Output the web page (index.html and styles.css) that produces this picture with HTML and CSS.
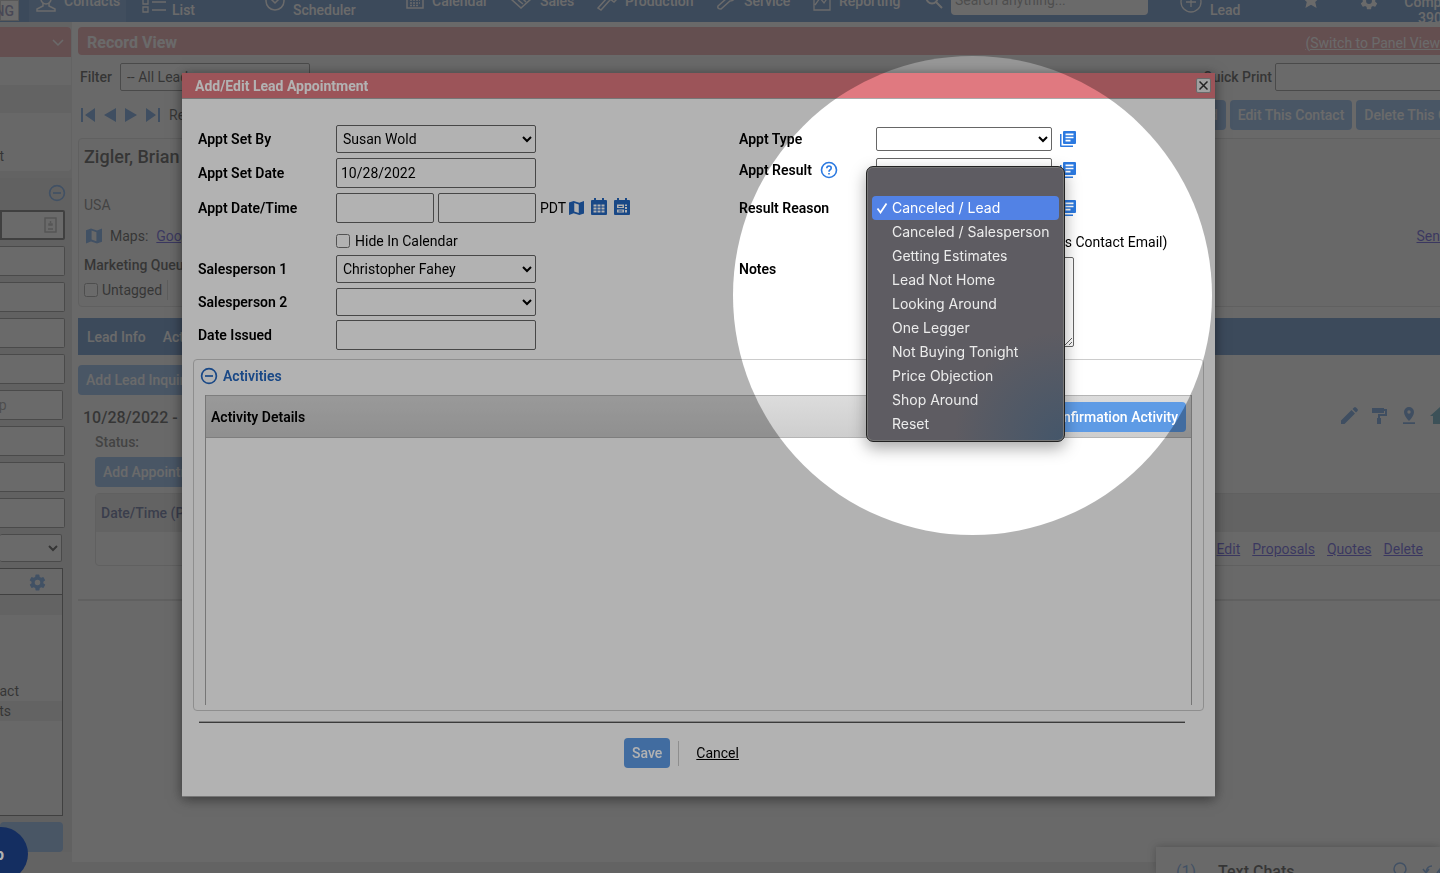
FILE: index.html
```html
<!DOCTYPE html>
<html lang="en">
<head>
    <meta charset="UTF-8">
    <meta name="viewport" content="width=device-width, initial-scale=1.0">
    <title>Record View</title>
    <link rel="stylesheet" href="styles.css">
</head>
<body>
    <!-- Shared icons -->
    <svg class="icon-defs" aria-hidden="true">
        <symbol id="i-map" viewBox="0 0 16 16"><path fill="currentColor" fill-rule="evenodd" d="M0 2.2 5 .5l6 2L16 .6v13.2l-5 1.7-6-2-5 1.9zM5.6 2.6v9l4.8 1.7v-9z"/></symbol>
        <symbol id="i-minus" viewBox="0 0 18 18"><g fill="none" stroke="currentColor" stroke-width="1.7"><circle cx="9" cy="9" r="7.4"/><path d="M5 9h8"/></g></symbol>
        <symbol id="i-copy" viewBox="0 0 18 18"><path fill="currentColor" fill-rule="evenodd" d="M5 1h11q1 0 1 1v11q0 1-1 1H5q-1 0-1-1V2q0-1 1-1zM6.500 3.600v1.600h8V3.600zm0 3.100v1.600h8V6.700zm0 3.100v1.600h5V9.800z"/><path fill="currentColor" d="M1 4h1.500v11.500H14V17H2q-1 0-1-1z"/></symbol>
        <symbol id="i-cal" viewBox="0 0 16 18"><path fill="currentColor" fill-rule="evenodd" d="M3 0h2v2h6V0h2v2h2q1 0 1 1v13q0 1-1 1H1q-1 0-1-1V3q0-1 1-1h2zM2.500 6.500v8h11v-8z"/><path stroke="currentColor" fill="none" d="M6 6v9M10 6v9M2 9h12M2 12h12"/></symbol>
        <symbol id="i-cal-edit" viewBox="0 0 16 18"><path fill="currentColor" fill-rule="evenodd" d="M3 0h2v2h6V0h2v2h2q1 0 1 1v13q0 1-1 1H1q-1 0-1-1V3q0-1 1-1h2zM3 6.500v3.500h7V6.500zm8 0V8h2V6.500zM11 9v2h2V9zM3 11.500v3h7v-3zm8 .5v2.500h2V12z"/><path stroke="currentColor" fill="none" d="M4.500 8.500h4M4.500 13h4"/></symbol>
        <symbol id="i-gear" viewBox="0 0 24 24"><path fill="currentColor" d="M19.400 13a7 7 0 0 0 0-2l2.100-1.600a.5.5 0 0 0 .1-.6l-2-3.500a.5.5 0 0 0-.6-.2l-2.500 1a7 7 0 0 0-1.700-1l-.4-2.700a.5.5 0 0 0-.5-.4h-4a.5.5 0 0 0-.5.400L9 5.100a7 7 0 0 0-1.700 1l-2.500-1a.5.5 0 0 0-.6.200l-2 3.500a.5.5 0 0 0 .1.600L4.500 11a7 7 0 0 0 0 2l-2.100 1.600a.5.5 0 0 0-.1.600l2 3.500c.1.200.4.300.6.200l2.500-1a7 7 0 0 0 1.700 1l.4 2.700c0 .2.200.4.500.4h4c.2 0 .5-.2.500-.4l.4-2.700a7 7 0 0 0 1.700-1l2.500 1c.2.100.5 0 .6-.2l2-3.500a.5.5 0 0 0-.1-.6zM12 15.500a3.500 3.500 0 1 1 0-7 3.500 3.500 0 0 1 0 7z"/></symbol>
    </svg>

    <!-- Top navigation -->
    <header class="topbar">
        <div class="logo">ING</div>
        <a class="nav-item active" href="#"><svg width="20" height="22" viewBox="0 0 20 22" fill="none" stroke="currentColor" stroke-width="1.500"><circle cx="10" cy="8" r="5"/><path d="M7 12v3L1 18v2h18v-2l-6-3v-3"/></svg><span>Contacts</span></a>
        <a class="nav-item list low" href="#"><svg width="24" height="26" viewBox="0 0 24 26" fill="none" stroke="currentColor" stroke-width="1.300"><path d="M1 12h5v5H1zM1 20h5v5H1zM10 15h14M10 23h14"/></svg><span>List</span></a>
        <a class="nav-item scheduler low" href="#"><svg width="20" height="20" viewBox="0 0 20 20" fill="none" stroke="currentColor" stroke-width="1.500"><circle cx="10" cy="10" r="9"/><path d="m6 8 4 4 4-4"/></svg><span>Scheduler</span></a>
        <a class="nav-item calendar" href="#"><svg width="18" height="18" viewBox="0 0 18 18" fill="none" stroke="currentColor" stroke-width="1.500"><path d="M1 2h16v15H1zM1 6h16"/><path stroke-dasharray="2 1" d="M4 9h10M4 12h10M4 14.500h8"/></svg><span>Calendar</span></a>
        <a class="nav-item sales" href="#"><svg width="22" height="18" viewBox="0 0 22 18" fill="none" stroke="currentColor" stroke-width="1.500"><path d="m1 8 10 9 10-9-4-5-6 3-5-3zM8 9l5 4M11 6l5 5"/></svg><span>Sales</span></a>
        <a class="nav-item production" href="#"><svg width="20" height="20" viewBox="0 0 20 20" fill="none" stroke="currentColor" stroke-width="1.500"><path d="m1 17 9-10 3 2L4 19zM8 6l4-4 7 7-2 2-4-3"/></svg><span>Production</span></a>
        <a class="nav-item service" href="#"><svg width="20" height="20" viewBox="0 0 20 20" fill="none" stroke="currentColor" stroke-width="1.500"><path d="M2 15 11 7q-1-4 4-6l-1 4 2 1 3-2q0 6-5 6l-9 8q-4 0-3-3z"/></svg><span>Service</span></a>
        <a class="nav-item reporting" href="#"><svg width="18" height="20" viewBox="0 0 18 20" fill="none" stroke="currentColor" stroke-width="1.300"><path d="M1 1v18h16V1M2 14l5-7 4 5 6-9"/></svg><span>Reporting</span></a>
        <div class="search">
            <svg width="18" height="18" viewBox="0 0 18 18" fill="none" stroke="currentColor" stroke-width="2"><circle cx="7" cy="7" r="5.500"/><path d="m11 11 6 6"/></svg>
            <input type="text" placeholder="Search anything..." aria-label="Search anything">
        </div>
        <a class="nav-item add low" href="#"><svg width="22" height="22" viewBox="0 0 22 22" fill="none" stroke="currentColor" stroke-width="1.300"><circle cx="11" cy="11" r="10"/><path d="M11 6v10M6 11h10"/></svg><span>Lead</span></a>
        <a class="nav-item star" href="#" aria-label="Favorites"><svg width="18" height="18" viewBox="0 0 18 18"><path fill="currentColor" d="m9 0 2.600 6L18 6.600l-4.800 4.300L14.600 17 9 13.800 3.400 17l1.400-6.100L0 6.600 6.400 6z"/></svg></a>
        <a class="nav-item settings" href="#" aria-label="Settings"><svg width="20" height="20"><use href="#i-gear"/></svg></a>
        <div class="company">Company<br>3900</div>
    </header>

    <div class="app">
        <!-- Left sidebar, scrolled out to the left -->
        <aside class="sidebar">
            <section class="side-panel">
                <div class="side-title"><svg width="12" height="12" viewBox="0 0 12 12" fill="none" stroke="currentColor" stroke-width="1.500"><path d="m1 4 5 5 5-5"/></svg></div>
                <div class="side-row"></div>
                <div class="side-row shaded"></div>
                <div class="side-row"></div>
                <div class="side-row">Contact</div>
            </section>
            <section class="side-search">
                <div class="side-head"><svg width="18" height="18"><use href="#i-minus"/></svg></div>
                <div class="name-field">
                    <input class="focused" type="text" aria-label="Last name">
                    <svg width="13" height="16" viewBox="0 0 13 16" fill="none" stroke="currentColor" stroke-width="1.500"><path d="M1 1h11v14H1zM4 12h5M5 8h3V7H5zM6.500 4v2"/></svg>
                </div>
                <input type="text" aria-label="First name">
                <input type="text" aria-label="Address">
                <input type="text" aria-label="City">
                <input type="text" aria-label="State">
                <input class="short" type="text" placeholder="Zip" aria-label="Zip">
                <input type="text" aria-label="Phone">
                <input type="text" aria-label="Email">
                <input type="text" aria-label="Lead number">
                <select class="short" aria-label="Status"><option></option></select>
                <div class="tag-box">
                    <div class="tag-head"><svg width="19" height="19"><use href="#i-gear"/></svg></div>
                    <div class="tag-row shaded"></div>
                    <div class="tag-space"></div>
                    <div class="tag-row contact">Contact</div>
                    <div class="tag-row shaded appts">Appts</div>
                </div>
                <button class="btn side-btn" type="button" aria-label="Search"></button>
            </section>
        </aside>

        <!-- Record content -->
        <main class="content">
            <div class="record-bar">
                <h1>Record View</h1>
                <a href="#">(Switch to Panel View)</a>
            </div>
            <div class="filter-row">
                <label for="filter">Filter</label>
                <select id="filter"><option>-- All Leads --</option></select>
                <label class="push" for="print">Quick Print</label>
                <select id="print"><option></option></select>
            </div>
            <div class="pager">
                <svg width="14" height="14" viewBox="0 0 14 14"><path fill="currentColor" d="M0 0h2v14H0zM14 0v14L4 7z"/></svg>
                <svg width="12" height="14" viewBox="0 0 12 14"><path fill="currentColor" d="M12 0v14L0 7z"/></svg>
                <svg width="12" height="14" viewBox="0 0 12 14"><path fill="currentColor" d="M0 0v14l12-7z"/></svg>
                <svg width="14" height="14" viewBox="0 0 14 14"><path fill="currentColor" d="M12 0h2v14h-2zM0 0v14l10-7z"/></svg>
                <span>Record 1</span>
                <button class="btn push" type="button">Add Lead</button>
                <button class="btn" type="button">Edit This Contact</button>
                <button class="btn" type="button">Delete This Contact</button>
            </div>

            <section class="card">
                <h2>Zigler, Brian</h2>
                <p class="country">USA</p>
                <div class="maps"><svg width="16" height="16"><use href="#i-map"/></svg><span>Maps:</span><a href="#">Google</a><a class="push" href="#">Send Email</a></div>
                <p class="queue">Marketing Queue</p>
                <div class="tags"><input type="checkbox" id="untagged"><label for="untagged">Untagged</label></div>
            </section>

            <nav class="tabs"><a href="#">Lead Info</a><a href="#">Activities</a></nav>
            <button class="btn inquiry" type="button">Add Lead Inquiry</button>

            <div class="lead-head">
                <h3>10/28/2022 - Lead</h3>
                <div class="lead-icons">
                    <svg width="17" height="17" viewBox="0 0 17 17"><path fill="currentColor" d="M0 13.500 10.500 3 14 6.500 3.500 17H0zM11.500 2 13 .5q1-.8 2 0L16.500 2q.8 1 0 2L15 5.500z"/></svg>
                    <svg width="16" height="17" viewBox="0 0 16 17"><path fill="currentColor" d="M0 1h12v1h3v7H8v2h1v6H5v-6h1V7h7V4h-1v2H0z"/></svg>
                    <svg width="14" height="17" viewBox="0 0 14 17"><path fill="currentColor" fill-rule="evenodd" d="M7 0a5 5 0 0 1 5 5q0 4-5 9-5-5-5-9a5 5 0 0 1 5-5zm0 3.300a1.700 1.700 0 1 0 0 3.400 1.700 1.700 0 0 0 0-3.400zM1 15.300h12V17H1z"/></svg>
                    <svg class="house" width="20" height="17" viewBox="0 0 20 17"><path fill="currentColor" d="m10 0 10 9h-3v8H3V9H0z"/></svg>
                </div>
            </div>
            <div class="lead-body">
                <p class="status">Status:</p>
                <button class="btn" type="button">Add Appointment</button>
                <table class="appts-table">
                    <thead><tr><th>Date/Time (PDT)</th><th></th></tr></thead>
                    <tbody><tr><td></td><td><a href="#">Edit</a><a href="#">Proposals</a><a href="#">Quotes</a><a href="#">Delete</a></td></tr></tbody>
                </table>
            </div>
            <hr>
        </main>
    </div>

    <footer class="footer"><span>Privacy Policy</span> | <span>Cookie Policy</span> | <span>Support</span> | Need Help? Contact Technical Support at 1.800.564.4840</footer>

    <div class="text-chats">
        <span class="count">(1)</span><strong>Text Chats</strong>
        <svg width="15" height="18" viewBox="0 0 15 18" fill="none" stroke="currentColor" stroke-width="1.500"><circle cx="7" cy="7" r="6"/><path d="m11 11 3 5"/></svg>
        <svg width="22" height="16" viewBox="0 0 22 16" fill="none" stroke="currentColor" stroke-width="1.500"><path d="M10 2q-5 0-6 6m-3-3 3 4 3-4M12 14q5 0 6-8m-3 3 3-4 3 4"/></svg>
    </div>

    <div class="backdrop"></div>
    <button class="help-bubble" type="button">Help</button>

    <!-- Add/Edit appointment dialog -->
    <div class="modal" role="dialog" aria-labelledby="modal-title">
        <div class="modal-title">
            <h2 id="modal-title">Add/Edit Lead Appointment</h2>
            <button class="close" type="button" aria-label="Close"><svg width="9" height="9" viewBox="0 0 9 9" fill="none" stroke="currentColor" stroke-width="1.500"><path d="m.5.5 8 8m0-8-8 8"/></svg></button>
        </div>
        <form class="modal-body">
            <div class="form-cols">
                <div class="form-left">
                    <label for="set-by">Appt Set By</label>
                    <select id="set-by"><option>Susan Wold</option></select>
                    <label for="set-date">Appt Set Date</label>
                    <input id="set-date" type="text" value="10/28/2022">
                    <label for="appt-date">Appt Date/Time</label>
                    <div class="date-time">
                        <input id="appt-date" type="text">
                        <input type="text" aria-label="Appt time">
                        <span>PDT</span>
                        <svg width="15" height="16"><use href="#i-map"/></svg>
                        <svg width="16" height="18"><use href="#i-cal"/></svg>
                        <svg width="16" height="18"><use href="#i-cal-edit"/></svg>
                    </div>
                    <div class="check"><input type="checkbox" id="hide-cal"><label for="hide-cal">Hide In Calendar</label></div>
                    <label for="sales-1">Salesperson 1</label>
                    <select id="sales-1"><option>Christopher Fahey</option></select>
                    <label for="sales-2">Salesperson 2</label>
                    <select id="sales-2"><option></option></select>
                    <label for="issued">Date Issued</label>
                    <input id="issued" type="text">
                </div>
                <div class="form-right">
                    <label for="type">Appt Type</label>
                    <div class="pick"><select id="type"><option></option></select><svg width="18" height="18"><use href="#i-copy"/></svg></div>
                    <label class="with-help" for="result">Appt Result
                        <svg width="18" height="18" viewBox="0 0 18 18" fill="none" stroke="currentColor" stroke-width="1.600"><circle cx="9" cy="9" r="7.500"/><path d="M6.800 7.300Q6.800 5 9 5t2.200 2q0 1.200-1.300 2Q9 9.600 9 10.700M9 12v1.600"/></svg>
                    </label>
                    <div class="pick"><select id="result"><option></option></select><svg width="18" height="18"><use href="#i-copy"/></svg></div>
                    <label for="reason">Result Reason</label>
                    <div class="pick">
                        <select id="reason"><option></option></select><svg width="18" height="18"><use href="#i-copy"/></svg>
                        <ul class="dropdown" role="listbox" aria-label="Result Reason">
                            <li role="option"></li>
                            <li class="selected" role="option" aria-selected="true"><svg width="12" height="12" viewBox="0 0 12 12" fill="none" stroke="currentColor" stroke-width="1.800"><path d="m1.500 6.500 3 4 6-9"/></svg>Canceled / Lead</li>
                            <li role="option">Canceled / Salesperson</li>
                            <li role="option">Getting Estimates</li>
                            <li role="option">Lead Not Home</li>
                            <li role="option">Looking Around</li>
                            <li role="option">One Legger</li>
                            <li role="option">Not Buying Tonight</li>
                            <li role="option">Price Objection</li>
                            <li role="option">Shop Around</li>
                            <li role="option">Reset</li>
                        </ul>
                    </div>
                    <div class="email-note">Send Confirmation (Uses Contact Email)</div>
                    <label for="notes">Notes</label>
                    <textarea id="notes"></textarea>
                </div>
            </div>

            <section class="activities">
                <h3><svg width="18" height="18"><use href="#i-minus"/></svg>Activities</h3>
                <div class="activity-box">
                    <div class="activity-head"><span>Activity Details</span><button class="btn" type="button">Add Confirmation Activity</button></div>
                </div>
            </section>
            <hr>
            <div class="actions"><button class="btn" type="submit">Save</button><a href="#">Cancel</a></div>
        </form>
    </div>

    <div class="spotlight"></div>
</body>
</html>
```
FILE: styles.css
```css
* {
    box-sizing: border-box;
}

body {
    margin: 0;
    height: 100vh;
    overflow: hidden;
    display: flex;
    flex-direction: column;
    font-family: Roboto, Arial, sans-serif;
    font-size: 14px;
    line-height: 20px;
    color: #000;
    background-color: #dcdcdc;
}

h1, h2, h3, p {
    margin: 0;
    font-weight: 500;
}

a {
    color: #1a0dcc;
}

svg {
    flex: none;
}

input, select, textarea, button {
    font-family: inherit;
    font-size: 14px;
    color: inherit;
}

input[type="text"], select, textarea {
    margin: 0;
    height: 30px;
    padding: 0 4px;
    border: 1px solid #666;
    border-radius: 2px;
    background-color: #fff;
}

select {
    height: 28px;
    padding: 0 2px;
}

input[type="checkbox"] {
    width: 14px;
    height: 14px;
    margin: 0;
}

.icon-defs {
    position: absolute;
    width: 0;
    height: 0;
}

.btn {
    height: 30px;
    padding: 0 8px;
    border: none;
    border-radius: 4px;
    background-color: #5e9be5;
    color: #fff;
    font-weight: 500;
    white-space: nowrap;
}

.push {
    margin-left: auto;
}

/* Top navigation */
.topbar {
    flex: none;
    display: grid;
    grid-template-columns: 19px 10px 97px 139px 141px 104px 87px 119px 97px 97px 270px 122px 57px 35px 80px;
    height: 22px;
    overflow: hidden;
    color: #fff;
    font-weight: 500;
    background-color: #2161b4;
}

.logo {
    display: flex;
    justify-content: flex-end;
    height: 21px;
    padding-right: 4px;
    border: 1px solid #aaa;
    background-color: #fff;
    color: #57589a;
}

.nav-item {
    display: flex;
    gap: 8px;
    color: #fff;
    text-decoration: none;
}

.nav-item span {
    margin-top: -9px;
}

.nav-item svg {
    margin-top: -9px;
}

.nav-item.low span {
    margin-top: 0;
}

.nav-item.active {
    grid-column: 3;
    padding-left: 7px;
    background-color: #3877c4;
}

.nav-item.list {
    padding-left: 16px;
    gap: 6px;
}

.nav-item.list svg {
    margin-top: -13px;
}

.company {
    text-align: center;
    line-height: 16px;
    margin-top: -6px;
}

.search {
    display: flex;
    gap: 8px;
    padding-left: 15px;
}

.search svg {
    margin-top: -9px;
}

.search input[type="text"] {
    width: 197px;
    height: 30px;
    margin-top: -15px;
    border: none;
    border-radius: 4px;
}

/* Page columns */
.app {
    flex: 1;
    min-height: 0;
    display: flex;
}

.sidebar {
    flex: none;
    width: 72px;
    padding-top: 5px;
    overflow: hidden;
}

.side-panel {
    height: 144px;
    margin-right: 1px;
    border-radius: 0 4px 4px 0;
    background-color: #f6f6f6;
}

.side-title {
    display: flex;
    justify-content: flex-end;
    align-items: center;
    height: 30px;
    padding-right: 7px;
    border-radius: 0 4px 0 0;
    background-color: #e07980;
    color: #fff;
}

.side-row {
    display: flex;
    justify-content: flex-end;
    height: 28px;
    padding: 5px 67px 0 0;
}

.shaded {
    background-color: #dcdcdc;
}

.side-search {
    display: flex;
    flex-direction: column;
    align-items: flex-start;
    gap: 6px;
    margin-top: 7px;
    padding-right: 6px;
    background-color: #d4d4d4;
}

.side-head {
    display: flex;
    justify-content: flex-end;
    width: 66px;
    height: 26px;
    padding-top: 6px;
    color: #3b82e0;
}

.side-search input[type="text"], .name-field {
    width: 65px;
    border-left: none;
    border-radius: 0 2px 2px 0;
}

.side-search .short {
    width: 62px;
    border-left: none;
}

.side-search input[type="text"].short {
    width: 63px;
    padding: 0;
    text-indent: -13px;
}

.name-field {
    display: flex;
    align-items: center;
    color: #999;
}

.name-field svg {
    margin-left: -21px;
}

.side-search input.focused {
    border: 2px solid #333;
}

.tag-box {
    width: 63px;
    height: 248px;
    border: 1px solid #333;
    border-left: none;
    background-color: #f6f6f6;
}

.tag-head {
    display: flex;
    justify-content: flex-end;
    height: 26px;
    padding: 4px 15px 0 0;
    border-bottom: 1px solid #333;
    color: #3b82e0;
}

.tag-row {
    display: flex;
    justify-content: flex-end;
    height: 20px;
}

.tag-space {
    height: 66px;
}

.tag-row.contact {
    padding-right: 43px;
}

.tag-row.appts {
    padding-right: 51px;
}

.side-btn {
    width: 63px;
}

/* Record content runs past the right edge of the window */
.content {
    flex: 1;
    min-width: 0;
    margin-right: -55px;
    padding: 5px 0 0 6px;
    background-color: #f8f8f8;
}

.record-bar {
    display: flex;
    justify-content: space-between;
    align-items: center;
    height: 28px;
    padding: 3px 50px 0 9px;
    border-radius: 4px;
    background-color: #e07980;
    color: #fff;
}

.record-bar h1 {
    font-size: 16px;
    font-weight: 700;
}

.record-bar a {
    color: #fff;
}

.filter-row {
    display: flex;
    align-items: center;
    gap: 8px;
    margin-top: 8px;
    padding-left: 2px;
    font-weight: 500;
}

.filter-row select {
    width: 190px;
}

.filter-row .push {
    margin-right: -5px;
}

#print {
    width: 220px;
}

.pager {
    display: flex;
    align-items: center;
    gap: 4px;
    margin-top: 9px;
    padding-left: 3px;
    color: #000;
}

.pager svg {
    margin-right: 5px;
    color: #2f76cf;
}

.card {
    height: 169px;
    margin-top: 8px;
    padding: 8px 0 0 5px;
    border: 1px solid #ccc;
    border-radius: 4px;
    background-color: #f3f3f3;
}

.card h2 {
    font-size: 18px;
}

.country {
    margin-top: 28px;
    color: #444;
    font-weight: 400;
}

.maps {
    display: flex;
    align-items: center;
    gap: 8px;
    margin-top: 11px;
    padding: 0 8px 0 2px;
}

.maps svg {
    color: #3b82e0;
}

.queue {
    margin-top: 9px;
}

.tags {
    display: flex;
    align-items: center;
    gap: 4px;
    width: 84px;
    margin-top: 5px;
    border-right: 1px solid #bbb;
}

.tabs {
    display: flex;
    align-items: center;
    gap: 17px;
    height: 37px;
    margin-top: 11px;
    padding-left: 9px;
    background-color: #2161b4;
}

.tabs a {
    color: #fff;
    font-weight: 500;
    text-decoration: none;
}

.inquiry {
    display: block;
    margin-top: 10px;
}

.lead-head {
    display: flex;
    justify-content: space-between;
    margin-top: 12px;
    padding-left: 5px;
}

.lead-head h3 {
    font-size: 16px;
    line-height: 22px;
}

.lead-icons {
    display: flex;
    gap: 14px;
    width: 154px;
    color: #2f76cf;
}

.lead-icons .house {
    color: #1f86a8;
}

.lead-body {
    padding-left: 17px;
}

.status {
    margin: 3px 0 5px;
    color: #444;
}

.appts-table {
    width: 100%;
    margin-top: 6px;
    border: 1px solid #ccc;
    border-radius: 4px;
    border-spacing: 0;
}

.appts-table th {
    height: 38px;
    padding: 0 5px;
    background-color: #d9d9d9;
    color: #14286e;
    text-align: left;
    font-weight: 500;
}

.appts-table td {
    height: 33px;
    padding: 0 71px 0 0;
    text-align: right;
}

.appts-table a {
    margin-left: 12px;
}

.content hr {
    margin: 33px 0 0;
    border: 0;
    border-top: 2px solid #ccc;
}

.footer {
    flex: none;
    height: 11px;
    padding-top: 8px;
    overflow: hidden;
    text-align: center;
    line-height: 18px;
}

.footer span {
    color: #800080;
}

.text-chats {
    position: absolute;
    right: 0;
    bottom: 0;
    display: flex;
    gap: 22px;
    width: 284px;
    height: 26px;
    padding: 15px 0 0 20px;
    overflow: hidden;
    background-color: #f8f8f8;
    box-shadow: 0 0 8px rgba(0, 0, 0, 0.5);
    color: #3b82e0;
}

.text-chats strong {
    flex: 1;
    color: #000;
    font-size: 16px;
    font-weight: 500;
}

.text-chats .count {
    font-size: 16px;
}

.text-chats svg + svg {
    margin: 2px -4px 0 -8px;
}

/* Overlay and dialog */
.backdrop {
    position: fixed;
    inset: 0;
    background-color: rgba(110, 110, 110, 0.7);
}

.help-bubble {
    position: fixed;
    left: -66px;
    bottom: -8px;
    width: 94px;
    height: 54px;
    padding: 0 24px 0 0;
    border: none;
    border-radius: 27px;
    background-color: #1e428c;
    color: #fff;
    font-size: 16px;
    font-weight: 700;
    text-align: right;
}

.modal {
    position: fixed;
    left: 182px;
    right: 225px;
    top: 73px;
    background-color: #fff;
    border-bottom: 1px solid #aaa;
    box-shadow: 0 2px 12px rgba(0, 0, 0, 0.5);
}

.modal-title {
    display: flex;
    justify-content: space-between;
    align-items: center;
    height: 26px;
    padding: 0 4px 0 13px;
    border-bottom: 1px solid #aaa;
    background-color: #e07980;
    color: #fff;
}

.modal-title h2 {
    font-size: 14px;
    font-weight: 700;
}

.close {
    display: flex;
    align-items: center;
    justify-content: center;
    width: 15px;
    height: 15px;
    padding: 0;
    border: 1px solid #999;
    border-radius: 2px;
    background-color: #e6e6e6;
    color: #333;
}

.modal-body {
    padding: 26px 11px 28px;
}

.form-cols {
    display: grid;
    grid-template-columns: 541px 1fr;
    padding-left: 5px;
}

.form-left, .form-right {
    display: grid;
    align-content: start;
    align-items: center;
    row-gap: 5px;
}

.form-left {
    grid-template-columns: 138px 200px;
    grid-template-rows: 28px 29px 31px 22px 28px 27px 30px;
}

.form-right {
    grid-template-columns: 137px 1fr;
    grid-template-rows: 28px 24px 42px 16px 92px;
}

.form-left > label, .form-right > label {
    font-weight: 600;
}

.date-time {
    display: flex;
    align-items: center;
    gap: 4px;
    width: 320px;
    color: #000;
}

.date-time input[type="text"] {
    width: 98px;
}

.date-time svg {
    margin-right: 3px;
    color: #2467c0;
}

.date-time svg + svg {
    margin-bottom: 2px;
}

.date-time span {
    margin-right: -1px;
}

.check {
    grid-column: 2;
    display: flex;
    align-items: center;
    gap: 5px;
    padding-top: 3px;
}

.form-right .with-help {
    display: flex;
    align-items: center;
    gap: 8px;
}

.with-help svg, .pick svg {
    color: #2b79e0;
}

.pick {
    position: relative;
    display: flex;
    align-items: center;
    gap: 7px;
}

.pick select {
    width: 176px;
    height: 24px;
}

.email-note {
    grid-column: 2;
    padding-left: 41px;
    white-space: nowrap;
}

.form-right label[for="notes"] {
    align-self: start;
    line-height: 28px;
}

#notes {
    width: 198px;
    height: 90px;
    align-self: end;
}

.dropdown {
    position: absolute;
    left: -10px;
    top: -30px;
    width: 199px;
    margin: 0;
    padding: 5px;
    list-style: none;
    border: 1px solid #222;
    border-radius: 7px;
    background: radial-gradient(circle at bottom right, #44566a, #5e5c62 110px);
    box-shadow: inset 0 0 0 1px #777, 0 6px 16px rgba(0, 0, 0, 0.35);
    color: #ececec;
    font-family: Inter, Arial, sans-serif;
    font-weight: 400;
}

.dropdown li {
    display: flex;
    align-items: center;
    height: 24px;
    padding-left: 20px;
    border-radius: 4px;
    white-space: nowrap;
}

.dropdown .selected {
    gap: 4px;
    padding-left: 4px;
    background-color: #5282e5;
    color: #fff;
}

.pick .dropdown svg {
    color: #fff;
}

.activities {
    margin-top: 9px;
    padding: 6px 11px 5px;
    border: 1px solid #ccc;
    border-radius: 4px;
}

.activities h3 {
    display: flex;
    align-items: center;
    gap: 5px;
    height: 20px;
    margin-left: -5px;
    font-size: 14px;
    font-weight: 600;
    color: #2467c0;
}

.activity-box {
    height: 310px;
    margin-top: 9px;
    border: 1px solid #aaa;
    border-width: 0 1px;
}

.activity-head {
    display: flex;
    justify-content: space-between;
    align-items: center;
    height: 43px;
    padding: 0 5px;
    border: 1px solid #b5b5b5;
    border-width: 1px 0;
    background: linear-gradient(#dcdcdc, #cecece);
    font-weight: 600;
}

.modal-body hr {
    margin: 10px 19px 0 6px;
    border: 0;
    border-top: 1px solid #bbb;
    border-bottom: 1px solid #555;
}

.actions {
    display: flex;
    justify-content: center;
    align-items: center;
    gap: 8px;
    margin-top: 15px;
    padding-right: 34px;
}

.actions a {
    padding-left: 17px;
    border-left: 1px solid #ccc;
    color: #000;
    line-height: 25px;
}

/* Everything outside the circle is dimmed */
.spotlight {
    position: fixed;
    left: 733px;
    top: 56px;
    width: 479px;
    height: 479px;
    border-radius: 50%;
    box-shadow: 0 0 0 2000px rgba(0, 0, 0, 0.3);
    pointer-events: none;
}
```
